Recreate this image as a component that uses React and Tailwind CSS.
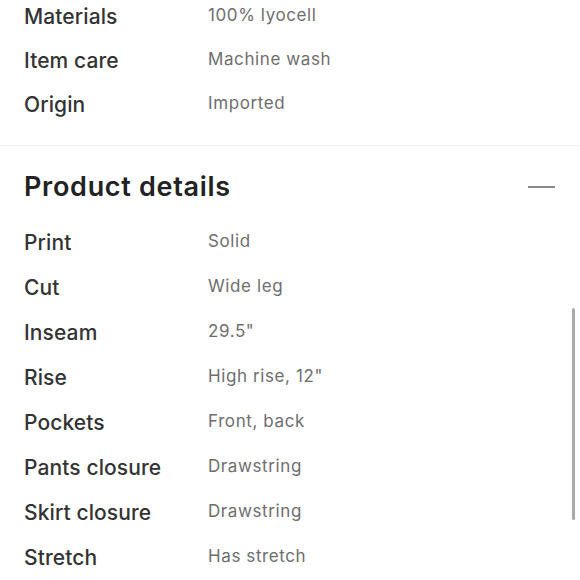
const material = [
  ["Materials", "100% lyocell"],
  ["Item care", "Machine wash"],
  ["Origin", "Imported"],
];

const details = [
  ["Print", "Solid"],
  ["Cut", "Wide leg"],
  ["Inseam", "29.5\""],
  ["Rise", "High rise, 12\""],
  ["Pockets", "Front, back"],
  ["Pants closure", "Drawstring"],
  ["Skirt closure", "Drawstring"],
  ["Stretch", "Has stretch"],
];

function Row({ label, value, tall }) {
  return (
    <div className={`flex items-center ${tall ? "h-[45px]" : "h-[44px]"}`}>
      <span className="w-[184px] text-[21px] leading-[28px] font-medium tracking-[0.1px] text-[#333]">
        {label}
      </span>
      <span className="text-[17px] leading-[24px] tracking-[0.6px] text-[#6e6e6e] -mt-1">
        {value}
      </span>
    </div>
  );
}

export default function App() {
  return (
    <main
      className="w-[580px] h-[580px] overflow-hidden bg-white relative"
      style={{ fontFamily: "Inter, 'Noto Sans', sans-serif" }}
    >
      <section className="px-6 -mt-[5px] pb-[18px]">
        {material.map(([l, v]) => (
          <Row key={l} label={l} value={v} />
        ))}
      </section>

      <div className="h-px bg-[#f0f0f0]" />

      <section className="pl-6 pr-[25px]">
        <div className="flex items-center justify-between pt-[25px] pb-[16px]">
          <h2 className="text-[27px] leading-[32px] font-semibold tracking-[0.7px] text-[#222]">
            Product details
          </h2>
          <span className="w-[27px] h-[2px] bg-[#888]" />
        </div>
        <div className="mt-[1px]">
          {details.map(([l, v]) => (
            <Row key={l} label={l} value={v} tall />
          ))}
        </div>
      </section>

      <div className="absolute left-[572px] top-[308px] w-[3px] h-[212px] rounded-full bg-[#aaa]" />
    </main>
  );
}
